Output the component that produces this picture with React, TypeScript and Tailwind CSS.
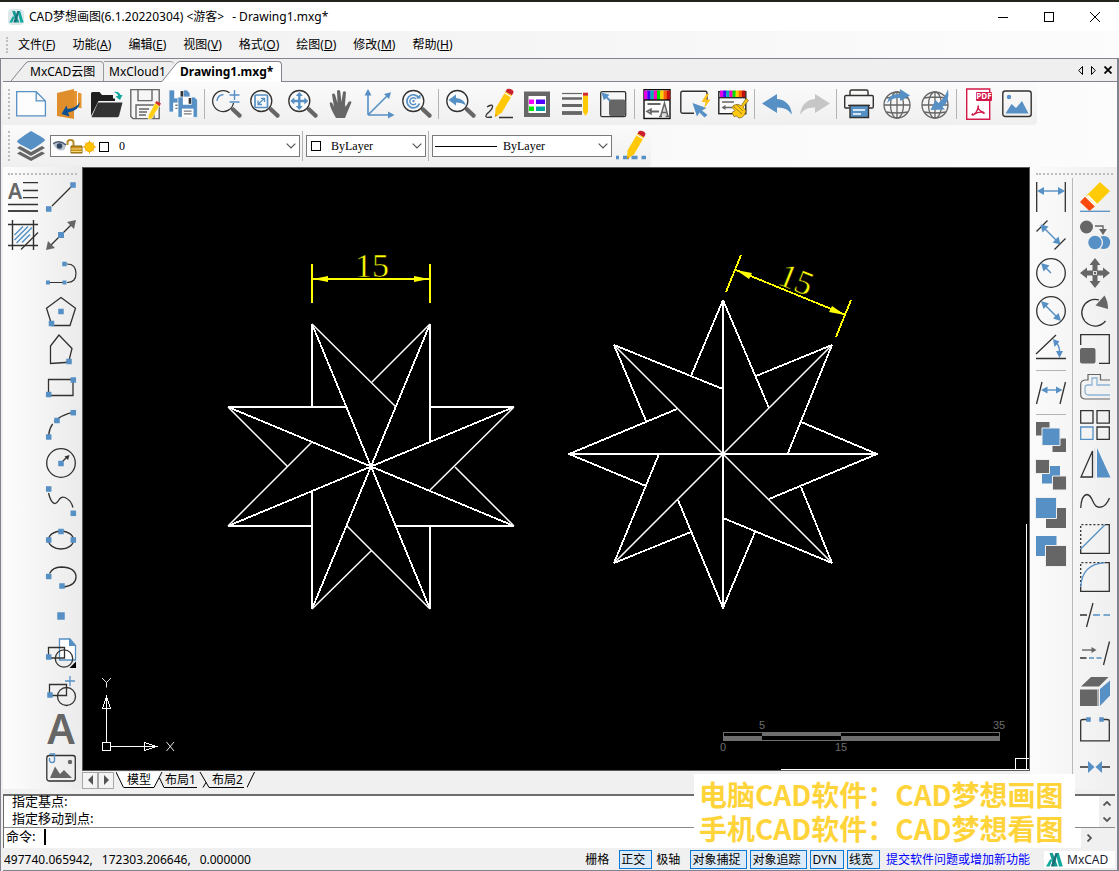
import React from "react";

const B = "#5690c4";
const D = "#33312f";
const G = "#666666";

type IconProps = { children: React.ReactNode };

function Ic({ children }: IconProps) {
  return (
    <svg viewBox="0 0 30 30" className="h-[30px] w-[30px] overflow-visible" fill="none" aria-hidden="true">
      {children}
    </svg>
  );
}

function Tool({ label, children }: { label: string; children: React.ReactNode }) {
  return (
    <button type="button" aria-label={label} title={label} className="flex h-[38px] w-[38px] shrink-0 items-center justify-center">
      <Ic>{children}</Ic>
    </button>
  );
}

function Sep() {
  return <span className="mx-0.5 h-[30px] w-0.5 shrink-0 border-l border-[#b4b4b4]" />;
}

function HSep() {
  return <span className="my-0.5 ml-1 h-0.5 w-[30px] shrink-0 border-t border-[#b4b4b4]" />;
}

function Sq({ x, y, s = 5.5 }: { x: number; y: number; s?: number }) {
  return <rect x={x - s / 2} y={y - s / 2} width={s} height={s} fill={B} />;
}

function Pencil() {
  return (
    <>
      <path d="M11 28l0.5-8.5L21.5 2.500l6.500 3.800L18 23.500z" fill="#ffc90a" />
      <path d="M21.500 2.500l1.500-2.500q2.800-.8 5 .8t1.300 3l-1.300 2.500z" fill="#c9202b" />
      <path d="M20.600 4l6.600 3.800" stroke="#fff" strokeWidth="1.200" />
      <path d="M11 28l.2-3 2.600 1.500z" fill="#e59a00" />
    </>
  );
}

function Lens({ children }: IconProps) {
  return (
    <>
      <path d="M19 19.500l2.500-1.500 8 7.500q.8 3-2.500 3.500l-8-7.500z" fill={G} />
      <circle cx="11.300" cy="12" r="10.500" stroke={D} strokeWidth="1.300" fill="#fafafa" />
      {children}
    </>
  );
}

function Globe() {
  return (
    <g stroke={G} strokeWidth="1.300">
      <circle cx="15" cy="16" r="13" />
      <ellipse cx="15" cy="16" rx="6.500" ry="13" />
      <path d="M15 3v26M2 16h26M4 9q11-2 22 0M4 23q11 2 22 0" />
    </g>
  );
}

function Floppy({ x, y, s }: { x: number; y: number; s: number }) {
  return (
    <g transform={`translate(${x} ${y}) scale(${s})`}>
      <path d="M0 0h17l3 3v18H0z" fill={B} stroke="#eef3f8" strokeWidth=".8" />
      <path d="M5 0h9v8H5z" fill="#fff" />
      <path d="M11 1h2.500v6H11z" fill="#333" />
      <path d="M4 12h12v9H4z" fill="#fff" />
      <path d="M6 14.500h8M6 17.500h8" stroke="#777" strokeWidth="1.300" />
    </g>
  );
}

function Spectrum({ h, w }: { h: number; w: number }) {
  const colors = ["#e000e0", "#4400ff", "#00b0b0", "#ff00c0", "#00e000", "#ffd000", "#ff6000", "#c01010"];
  return (
    <>
      {colors.map((c, i) => (
        <rect key={c} x={2 + (i * w) / 8} y="1.500" width={w / 8 + 0.2} height={h} fill={c} />
      ))}
    </>
  );
}

function Picture({ tone }: { tone: string }) {
  return (
    <>
      <rect x=".8" y="2" width="28.400" height="25.500" rx="2.500" stroke={D} strokeWidth="1.400" />
      <path d="M3.500 24.500l6-9.500 4.500 4 6-7 6.500 12.500z" fill={tone} />
    </>
  );
}

const topTools: (React.ReactNode | null)[] = [
  <Tool label="新建">
    <path d="M.7 2.700h19.500l9.200 9.200v15H.7zM20.200 2.700v9.200h9.200" fill="#fdfdfd" stroke={B} strokeWidth="1.300" />
  </Tool>,
  <Tool label="导入">
    <path d="M20 2h3v18h-3zM24 3.500l3.500 1v15l-3.500-1z" fill="#e59632" />
    <path d="M3 4l17-4v30L3 27z" fill="#e08e2c" />
    <path d="M26 13q-1 9-12 10.500l1.500 4L7.500 25l5-8.500 1 3.500q9-1 12.500-7z" fill="#0d4f93" />
  </Tool>,
  <Tool label="打开">
    <path d="M-1 27V4.500q0-1.500 1.500-1.500h7l2.500 3H21v3.500h2V12H6.500z" fill="#1f1f1f" />
    <path d="M6 13.500h24.500L27 27q-.5 1.200-2 1.200H-.5z" fill="#333" />
    <path d="M21 3q6-1.500 7.500 3h2l-2.500 5-4.500-3.500 2.500-.8Q25.500 4 21 3z" fill="#16a79c" />
  </Tool>,
  <Tool label="保存">
    <path d="M.8.600h28.400v29H3l-2.200-2.200z" stroke={G} strokeWidth="1.400" fill="#f6f6f6" />
    <path d="M8 .6v11h14V.6M6 29.500V16h18v13.500" stroke={G} strokeWidth="1.400" />
    <path d="M9 20h10M9 23h8M9 26h7" stroke={G} strokeWidth="1.500" />
    <path d="M25 14l4.500 3L22 29.500l-4 1 .5-4.500z" fill="#ffcf10" stroke="#fff" strokeWidth=".5" />
    <path d="M25 14l1.500-2 4.500 2.500-1.500 2.500z" fill="#d32a2a" />
  </Tool>,
  <Tool label="全部保存">
    <Floppy x={1} y={1} s={1.050} />
    <Floppy x={10} y={8} s={0.970} />
  </Tool>,
  null,
  <Tool label="实时缩放">
    <path d="M19 19.500l2.500-1.500 8 7.500q.8 3-2.500 3.500l-8-7.500z" fill={G} />
    <path d="M17.500 3.700A10.500 10.500 0 1 0 21.500 14" stroke={D} strokeWidth="1.300" />
    <path d="M5 12q.5-6 6.500-6.500M22.500 1v10M17.500 6h10M17.500 13h10" stroke={B} strokeWidth="1.400" />
  </Tool>,
  <Tool label="窗口缩放">
    <Lens>
      <rect x="5" y="6" width="12.500" height="12.500" rx="1" stroke={B} strokeWidth="1.700" />
      <path d="M8.500 15l5.500-5.500M14.500 13V9.300h-3.700M8 11.500v4h4" stroke={B} strokeWidth="1.300" />
    </Lens>
  </Tool>,
  <Tool label="范围缩放">
    <Lens>
      <path d="M11.300 3l3.500 4h-2.300v3.800h3.800V8.500l4 3.500-4 3.500v-2.300h-3.800V17h2.300l-3.500 4-3.500-4h2.300v-3.800H6.300v2.300l-4-3.500 4-3.500v2.300h3.800V7H7.800z" fill={B} />
    </Lens>
  </Tool>,
  <Tool label="平移">
    <path d="M10 29Q4 19 3.700 14q1.300-1.500 2.800.5l1.500 3.500L6 5.500Q7.500 3.500 9 5.500L11.500 14 11 2q1.500-2 3.200 0L15.500 13 17 3q1.700-1.700 3 .3L19 15l.5 3 3-5q2-1.500 3 .2L21 24l-2 5z" fill={G} />
  </Tool>,
  <Tool label="坐标系">
    <path d="M4 26V4M4 26h22M4 26L23 7" stroke={B} strokeWidth="1.600" />
    <path d="M4 0l3.500 6.500H.5zM30.500 26L24 29.500v-7zM27 3.200L25 10l-5-5z" fill={B} />
  </Tool>,
  <Tool label="重生成">
    <Lens>
      <path d="M17 9A6.500 6.500 0 1 0 17.500 14.500" stroke={B} strokeWidth="1.700" />
      <path d="M14 9.500h4.500V5z" fill={B} />
      <path d="M14 10A3.500 3.500 0 1 0 14 14.500" stroke={B} strokeWidth="1.400" />
      <circle cx="11.500" cy="12" r="1.200" fill={B} />
    </Lens>
  </Tool>,
  null,
  <Tool label="上一视图">
    <Lens>
      <path d="M2.500 11L10 5.500V9q8 .5 10 7.500-4-3-10-3v3z" fill={B} />
    </Lens>
  </Tool>,
  <Tool label="编辑">
    <path d="M3 18q5-3 5.500-1T5 23q-3.500 3-3 4.500t6 .5M15 28.500h14" stroke={D} strokeWidth="1.300" />
    <Pencil />
  </Tool>,
  <Tool label="特性">
    <rect x="2" y="2.500" width="26" height="25.500" fill={G} />
    <rect x="6.500" y="7" width="17.500" height="17" fill="#fff" />
    <rect x="7" y="10.500" width="5" height="4.500" fill="#ff00ff" />
    <rect x="14" y="10.500" width="9" height="4.500" fill="#5000ff" />
    <rect x="7" y="17.500" width="5" height="4.500" fill="#00f000" />
    <rect x="14" y="17.500" width="9" height="4.500" fill="#00a8a0" />
  </Tool>,
  <Tool label="线宽">
    <path d="M2 4.500h20" stroke={G} strokeWidth="1.200" />
    <path d="M2 9.500h20" stroke={G} strokeWidth="2.500" />
    <path d="M2 16.500h20" stroke={G} strokeWidth="3" />
    <path d="M2 24h20" stroke={G} strokeWidth="3.800" />
    <path d="M23 6.500h5V23l-2.500 4L23 23z" fill="#ffc90a" />
    <path d="M23 3.700h5v3h-5z" fill="#d32a2a" />
  </Tool>,
  <Tool label="缩放图形">
    <rect x="2.700" y="2.700" width="25" height="25" rx="1.500" stroke={D} strokeWidth="1.300" />
    <rect x="11" y="10.500" width="16.500" height="16.500" rx="2" fill={G} />
    <path d="M3.500 3.500l8 2.300-2 2 3 3-1.400 1.400-3-3-2.300 2z" fill={B} />
  </Tool>,
  null,
  <Tool label="文字样式">
    <rect x="2" y=".7" width="26" height="28.800" fill="#fbfbfb" stroke="#111" strokeWidth="1.400" />
    <Spectrum h={9.500} w={26} />
    <path d="M2 11h26" stroke="#111" strokeWidth="1.400" />
    <path d="M5.500 15h13M8 22.500h9" stroke={G} strokeWidth="1.800" />
    <path d="M5 22.500l4-2.500v5zM17 27.500h3M23.500 27.500H28M18.500 27.500l4-13.500 3.500 13.500M19.700 23.500h5" stroke={G} strokeWidth="1.500" fill={G} fillOpacity="0.200" />
  </Tool>,
  <Tool label="快速选择">
    <path d="M27 14V4q0-1.700-1.700-1.700H2.500Q.8 2.300.8 4v18.500q0 1.700 1.700 1.700H14" stroke={D} strokeWidth="1.400" />
    <path d="M12.500 14l14 5-4.500 2.500 5.500 4.500-3 2.500-5-5-2.500 4z" fill={B} />
    <path d="M26.500 5l-5 8h4l-1.500 6.500 6.500-9h-4.500L29 5z" fill="#ffc21a" />
  </Tool>,
  <Tool label="特性匹配">
    <rect x=".8" y="2.700" width="27" height="22" fill="#fafafa" stroke="#222" strokeWidth="1.400" />
    <Spectrum h={6.500} w={25} />
    <path d="M1 8.700h27" stroke="#222" strokeWidth="1.300" />
    <path d="M4 13h12M6 18.500h9" stroke={G} strokeWidth="1.700" />
    <path d="M3.500 18.500l4-2.500v5z" fill={G} />
    <path d="M28 9.500l2.500 2L25 18l3 4q-2 7-7 7-2-3-5-1.500l-2-4 3-2-3-3 2-2.500 5-.5 2 1.500z" fill="#ffc914" stroke="#8a6d1a" strokeWidth=".8" />
    <path d="M15 17l9 8M18 15l7 7" stroke="#8a6d1a" strokeWidth=".8" />
  </Tool>,
  null,
  <Tool label="撤销">
    <path d="M0 14.500L15 5v5q13 1 15 15.500Q25 18 15 18.500V24z" fill={B} />
  </Tool>,
  <Tool label="重做">
    <path d="M30 14.500L15 5v5Q2 11 0 25.500 5 18 15 18.500V24z" fill="#c6c6c6" />
  </Tool>,
  null,
  <Tool label="打印">
    <path d="M6 6V2.500q0-1.500 1.500-1.500h15Q24 1 24 2.500V6M5.500 19H2q-1.300 0-1.300-1.300V8Q.7 6.500 2 6.500h26q1.300 0 1.300 1.500v9.700Q29.300 19 28 19h-3.500" stroke={D} strokeWidth="1.400" />
    <path d="M4 16.500h22" stroke={D} strokeWidth="1.400" />
    <path d="M6 16.500h18.500v12H6z" fill={B} stroke={D} strokeWidth="1.400" />
    <path d="M9 21h12M9 25h8" stroke="#fff" strokeWidth="1.300" />
  </Tool>,
  <Tool label="网页发布">
    <Globe />
    <path d="M5 14Q7 4 18 5V0l10 6.500L18 12V9Q10 8.500 5 14z" fill={B} />
  </Tool>,
  <Tool label="网页下载">
    <Globe />
    <path d="M28 0Q30 13 22.500 18l2.500 2.500-14.500.5 5-10 3 3Q25 9 28 0z" fill={B} />
  </Tool>,
  null,
  <Tool label="导出PDF">
    <path d="M2.700 0h23v30.300h-23z" fill="#fff" stroke="#d4184a" strokeWidth="1.400" />
    <rect x="12" y="3" width="16" height="9" rx="1" fill="#d4184a" />
    <text x="20" y="10.300" textAnchor="middle" fontSize="8" fontFamily="Open Sans" fontWeight="700" fill="#fff">PDF</text>
    <path d="M9 26q5-3 5.300-9.500-1 5 5.500 7Q14 22 9 26q-2 0 0-1.500M19.800 23.500q1 1.300-1 .6" stroke="#d4184a" strokeWidth="1.400" />
  </Tool>,
  <Tool label="导出图片">
    <Picture tone={B} />
    <circle cx="7" cy="8" r="2.200" fill={B} />
  </Tool>,
];

const leftA: React.ReactNode[] = [
  <Tool label="多行文字">
    <path d="M15 .7h15M15 8.500h15M15 15.700h15M0 22.500h30" stroke={D} strokeWidth="1.300" />
    <path d="M0 29h30" stroke={D} strokeWidth="1.800" />
    <text x="0" y="16.500" fontSize="21" fontFamily="Noto Sans" fontWeight="600" fill={G}>A</text>
  </Tool>,
  <Tool label="填充">
    <path d="M0 4.500h30M0 25.500h30M4.500 0v30M25.500 0v30" stroke={D} strokeWidth="1.400" />
    <path d="M13 29.500L30 12.500" stroke={D} strokeWidth="1.300" />
    <path d="M6.500 15L15 6.500M6.500 20L20 6.500M8.500 23L24 7.500M14 22.500l8-8" stroke={B} strokeWidth="1.500" />
  </Tool>,
];

const leftB: React.ReactNode[] = [
  <Tool label="直线">
    <path d="M6 24L25 5" stroke={D} strokeWidth="1.200" />
    <Sq x={27} y={3} />
    <Sq x={2.700} y={27} />
  </Tool>,
  <Tool label="构造线">
    <path d="M4 26L26 4" stroke={D} strokeWidth="1.200" />
    <path d="M30 0l-2 9-7-7zM0 30l2-9 7 7z" fill={G} />
    <Sq x={15} y={15} s={6} />
  </Tool>,
  <Tool label="多段线">
    <path d="M2 24.500h16M21 6q9 0 9 9.300t-9 9.200" stroke={D} strokeWidth="1.200" />
    <Sq x={18.500} y={6} s={4.500} />
    <Sq x={2} y={24.500} s={4} />
    <Sq x={18.500} y={24.500} s={4} />
  </Tool>,
  <Tool label="正多边形">
    <path d="M15 1.500l14.500 10.700L24 29.500H6L.5 12.200z" stroke={D} strokeWidth="1.300" />
    <Sq x={15} y={15.500} />
    <Sq x={5.500} y={27.500} />
  </Tool>,
  <Tool label="多边形">
    <path d="M13 1L4.500 12v17.500l15-1 3.500-2 3-12z" stroke={D} strokeWidth="1.300" />
    <Sq x={23} y={27.500} />
  </Tool>,
  <Tool label="矩形">
    <path d="M2.500 7.500h24.500v16H2.500z" stroke={D} strokeWidth="1.300" />
    <Sq x={27.300} y={8} />
    <Sq x={2.700} y={22.500} />
  </Tool>,
  <Tool label="圆弧">
    <path d="M2.700 25Q4 8 26 2.700" stroke={D} strokeWidth="1.300" strokeDasharray="12 2.500 3 2.500 20" />
    <Sq x={27.300} y={2.700} />
    <Sq x={11} y={10.500} />
    <Sq x={2.700} y={27} />
  </Tool>,
  <Tool label="圆">
    <circle cx="15" cy="15" r="14.300" stroke={D} strokeWidth="1.300" />
    <path d="M15 15l6-6" stroke={D} strokeWidth="1.200" />
    <path d="M23.500 7l-1.500 5-3.500-3.500z" fill={D} />
    <Sq x={15} y={15.500} />
  </Tool>,
  <Tool label="样条曲线">
    <path d="M2.500 7q2.500 10 6 10.500 2.500 0 5-4.500 2-2.500 5.500-1.500 6 2.500 8 10" stroke={D} strokeWidth="1.300" />
    <Sq x={2.700} y={3} />
    <Sq x={27.300} y={27.300} />
  </Tool>,
  <Tool label="椭圆">
    <ellipse cx="15" cy="16" rx="12.500" ry="9" stroke={D} strokeWidth="1.300" />
    <Sq x={15} y={7.500} />
    <Sq x={2.700} y={16} />
    <Sq x={27.300} y={16} />
  </Tool>,
  <Tool label="椭圆弧">
    <path d="M3.500 11.500Q7 5 15 5q15 .5 15 10 0 8-12 10" stroke={D} strokeWidth="1.300" />
    <Sq x={2.700} y={14.500} />
    <Sq x={16} y={24} />
  </Tool>,
  <Tool label="点">
    <Sq x={15} y={16} s={7.500} />
  </Tool>,
  <Tool label="插入块">
    <path d="M13.500 1H24l5.500 6.500V22h-16z" fill="#fff" stroke={B} strokeWidth="1.300" />
    <path d="M23 0l7 8h-7z" fill={B} />
    <path d="M2.500 9.500h16v10.500h-16z" stroke={D} strokeWidth="1.300" />
    <circle cx="18" cy="20.500" r="8.700" stroke={D} strokeWidth="1.300" />
    <Sq x={2.700} y={19} />
    <path d="M30 23.500V30h-6.500z" fill="#000" />
  </Tool>,
  <Tool label="创建块">
    <path d="M3.500 8.500h17v11h-17z" stroke={D} strokeWidth="1.300" />
    <circle cx="20.500" cy="20.500" r="9" stroke={D} strokeWidth="1.300" />
    <path d="M24 0v10M19 5h10" stroke={B} strokeWidth="1.300" />
    <Sq x={4} y={19} />
  </Tool>,
  <Tool label="单行文字">
    <text x="15" y="30" textAnchor="middle" fontSize="41" fontFamily="Noto Sans" fontWeight="600" fill={G}>A</text>
  </Tool>,
  <Tool label="插入图片">
    <rect x=".8" y="3.500" width="28.500" height="25.500" rx="2.500" stroke={D} strokeWidth="1.300" />
    <path d="M4 26L9 14.500l5 7.500 4-4 8 8z" fill={G} />
    <circle cx="24" cy="10" r="2.200" fill={G} />
    <path d="M3.500 2h5v6.500q0 2-2.200 2T3.500 8.500V6" stroke={B} strokeWidth="1.400" />
  </Tool>,
];

function Stack({ order }: { order: number }) {
  const shapes = [
    <><path d="M0 0h13.500v13.500H0zM16.500 16.500h13.500V30H16.500z" fill={G} /><path d="M6 6h18v17.500H6z" fill={B} stroke="#eee" /></>,
    <><path d="M6 6h18v17.500H6z" fill={B} /><path d="M-.5-.5h14V13.500h-14zM16.500 16h14v14h-14z" fill={G} stroke="#eee" /></>,
    <><path d="M10 10h20v20H10z" fill={G} /><path d="M-.5-.5h21v21h-21z" fill={B} stroke="#eee" /></>,
    <><path d="M0 0h20.500v20H0z" fill={B} /><path d="M9.500 9.500h21v21h-21z" fill={G} stroke="#eee" /></>,
  ];
  return shapes[order];
}

const rightA: (React.ReactNode | null)[] = [
  <Tool label="线性标注">
    <path d="M.7 0v30M29.300 0v30" stroke={D} strokeWidth="1.300" />
    <path d="M5 9h20" stroke={B} strokeWidth="1.400" />
    <path d="M1 9l7-4v8zM29 9l-7-4v8z" fill={B} />
  </Tool>,
  <Tool label="对齐标注">
    <path d="M.5 11.500L11.500.5M18.500 29.500l11-11" stroke={D} strokeWidth="1.300" />
    <path d="M7 7l15 15" stroke={B} strokeWidth="1.400" />
    <path d="M4.500 4.500l8 2-6 6zM24.500 24.500l-8-2 6-6z" fill={B} />
  </Tool>,
  <Tool label="半径标注">
    <circle cx="15" cy="15" r="14.300" stroke={D} strokeWidth="1.300" />
    <path d="M8 8l7 7" stroke={B} strokeWidth="1.500" />
    <path d="M5 5l8.500 2.500-6 6z" fill={B} />
  </Tool>,
  <Tool label="直径标注">
    <circle cx="15" cy="15" r="14.300" stroke={D} strokeWidth="1.300" />
    <path d="M8 8l14 14" stroke={B} strokeWidth="1.500" />
    <path d="M5 5l8 2.500L7.500 13zM25 25l-8-2.500 5.500-5.500z" fill={B} />
  </Tool>,
  <Tool label="角度标注">
    <path d="M0 20L20 1M0 24.500h30" stroke={D} strokeWidth="1.300" />
    <path d="M20 8q4 5 3.500 11" stroke={B} strokeWidth="1.400" />
    <path d="M17 5l6.500 2.500-5 5.500zM20 17h7l-3.500 7z" fill={B} />
  </Tool>,
  null,
  <Tool label="编辑标注">
    <path d="M.5 26L6 4M24 26l5.500-22" stroke={D} strokeWidth="1.300" />
    <path d="M8 12h15" stroke={B} strokeWidth="1.400" />
    <path d="M5 12l6.500-3.500v7zM26.500 12L20 8.500v7z" fill={B} />
  </Tool>,
  null,
  <Tool label="置于对象之上"><Stack order={0} /></Tool>,
  <Tool label="置于对象之下"><Stack order={1} /></Tool>,
  <Tool label="前置"><Stack order={2} /></Tool>,
  <Tool label="后置"><Stack order={3} /></Tool>,
];

const rightB: React.ReactNode[] = [
  <Tool label="删除">
    <path d="M20 0l10 9-14.500 14.500L6 14z" fill="#ffcb05" />
    <path d="M6 14l9.500 9.500-1.500 1.500L4.500 15.500z" fill="#fff" />
    <path d="M5 14.800L14.800 24.500 9.500 29 0 20z" fill="#fb4b0c" />
    <path d="M7.500 13.500l9 9" stroke="#fff" strokeWidth="2" />
    <path d="M0 29.300h30" stroke={B} strokeWidth="1.300" />
  </Tool>,
  <Tool label="复制">
    <circle cx="6.500" cy="7" r="6.500" fill={G} />
    <path d="M15 6h8v5" stroke={G} strokeWidth="1.400" />
    <path d="M19 9h8l-4 6z" fill={G} />
    <circle cx="15" cy="22.500" r="6.700" fill={B} />
    <path d="M20.500 16.500q9-2 9.700 6-.7 8-9.700 6 5-6 0-12z" fill={B} />
  </Tool>,
  <Tool label="移动">
    <path d="M15 0l5.500 7h-3v5.500H23v-3l7 5.500-7 5.500v-3h-5.500V23h3L15 30l-5.500-7h3v-5.500H7v3L0 15l7-5.500v3h5.500V7h-3z" fill={G} />
    <rect x="13.500" y="13.500" width="3" height="3" stroke="#ddd" />
  </Tool>,
  <Tool label="旋转">
    <path d="M19 4A13.300 13.300 0 1 0 25.500 25" stroke={D} strokeWidth="1.300" />
    <path d="M24.500 -.5Q28 5 28 13L15.500 9.500z" fill={G} />
  </Tool>,
  <Tool label="缩放">
    <path d="M.7 11V.7h28.600v28.600H19" stroke={D} strokeWidth="1.300" />
    <rect x="0" y="14" width="15.500" height="15.500" rx="2" fill={G} />
  </Tool>,
  <Tool label="偏移">
    <path d="M30 8h-9.500V2.500H8V8H5Q.7 8.500.7 12.500v10q0 4 4 4.500H30" stroke={G} strokeWidth="1.200" />
    <path d="M30 13H17V6h-5v7H8q-3 0-3 3v3q0 4 3.500 4H30" stroke="#8fb4d6" strokeWidth="1.300" />
  </Tool>,
  <Tool label="阵列">
    <path d="M.7.700H13v12.500H.7zM17 .7h12.300v12.500H17zM17 17h12.300v12.300H17z" stroke={D} strokeWidth="1.300" />
    <path d="M.7 17H13v12.300H.7z" stroke={B} strokeWidth="1.300" />
  </Tool>,
  <Tool label="镜像">
    <path d="M12.500 3v26H1z" stroke={D} strokeWidth="1.300" />
    <path d="M17 0l13.500 29.500H17z" fill={B} />
    <path d="M14.800 0v30" stroke="#ddd" />
  </Tool>,
  <Tool label="编辑曲线">
    <path d="M.7 22Q1.500 9 7 8.500q3 0 6 7t8 5.500q5-.5 8.500-9" stroke={D} strokeWidth="1.300" />
  </Tool>,
  <Tool label="倒角">
    <path d="M.7 25v4.300h28.600V.7H25" stroke={D} strokeWidth="1.300" />
    <path d="M.7 24V.7H25" stroke={D} strokeWidth="1.300" strokeDasharray="2 2" />
    <path d="M.7 25L25 .7" stroke={B} strokeWidth="1.300" />
  </Tool>,
  <Tool label="圆角">
    <path d="M.7 25v4.300h28.600V.7H25" stroke={D} strokeWidth="1.300" />
    <path d="M.7 24V.7H25" stroke={D} strokeWidth="1.300" strokeDasharray="2 2" />
    <path d="M.7 25Q2 2 25 .7" stroke={B} strokeWidth="1.300" />
  </Tool>,
  <Tool label="修剪">
    <path d="M0 15h7M6.500 27L13 3" stroke={D} strokeWidth="1.300" />
    <path d="M13 15h7M23.500 15H30" stroke={B} strokeWidth="1.300" />
  </Tool>,
  <Tool label="延伸">
    <path d="M0 20h6.500M23.500 27L29.500 3.500" stroke={D} strokeWidth="1.300" />
    <path d="M9 20h5M16.500 20h5" stroke={B} strokeWidth="1.300" />
    <path d="M2 12h11" stroke={G} strokeWidth="1.400" />
    <path d="M11.500 9l5 3-5 3z" fill={G} />
  </Tool>,
  <Tool label="立方体">
    <path d="M0 13.500h17.500V30H0zM11 1h17.500l-9.500 9.500H1z" fill={G} />
    <path d="M20 13l10-8.500v15L20 30z" fill={B} />
    <path d="M18.500 13v17" stroke="#999" strokeWidth=".8" />
  </Tool>,
  <Tool label="打断">
    <path d="M7 5.500H3Q.7 5.500.7 7v19.800h28.600V7Q29.300 5.500 27 5.500h-4" stroke={D} strokeWidth="1.300" />
    <Sq x={8.500} y={5.500} s={4.500} />
    <Sq x={21.500} y={5.500} s={4.500} />
  </Tool>,
  <Tool label="合并">
    <path d="M0 15h9M21 15h9" stroke={D} strokeWidth="1.400" />
    <path d="M8 9l6.500 6L8 21zM22 9l-6.500 6 6.500 6z" fill={B} />
  </Tool>,
];

function withKeys(items: (React.ReactNode | null)[], sep: React.ReactNode) {
  return items.map((t, i) => <React.Fragment key={i}>{t ?? sep}</React.Fragment>);
}

function Chevron() {
  return (
    <svg viewBox="0 0 10 6" className="mr-[3px] h-[6px] w-[10px] shrink-0" fill="none" aria-hidden="true">
      <path d="M.7.700L5 5 9.300.700" stroke="#555" strokeWidth="1.200" />
    </svg>
  );
}

const selectClass = "h-full min-w-0 flex-1 appearance-none bg-transparent font-['Liberation_Serif','Noto_Sans_CJK_SC',serif] text-[12px] text-black outline-none";
const comboClass = "flex h-[22px] items-center border border-[#7a7a7a] bg-white";

const thick: number[][] = [
  [312, 324, 430, 609], [430, 324, 312, 609], [228, 407, 514, 526], [228, 526, 514, 407],
  [312, 324, 312, 407], [430, 324, 430, 442], [430, 407, 514, 407], [514, 526, 396, 526],
  [430, 526, 430, 609], [312, 609, 312, 491], [312, 526, 228, 526], [228, 407, 347, 407],
  [723, 300, 723, 609], [568, 454, 878, 454], [723, 300, 691, 376], [614, 345, 723, 389],
  [723, 300, 769, 408], [832, 345, 756, 376], [832, 345, 788, 453], [877, 454, 801, 422],
  [877, 454, 769, 499], [832, 563, 801, 487], [832, 563, 723, 518], [723, 608, 755, 532],
  [723, 608, 678, 500], [614, 563, 691, 532], [614, 563, 659, 454], [569, 454, 646, 486],
  [569, 454, 677, 409], [614, 345, 646, 421],
];
const thin: number[][] = [
  [312, 324, 396, 407], [430, 324, 372, 382], [514, 407, 430, 490], [514, 526, 455, 467],
  [430, 609, 347, 526], [312, 609, 371, 551], [228, 526, 312, 442], [228, 407, 287, 466],
  [614, 345, 832, 563], [832, 345, 614, 563],
];

function Lines({ data }: { data: number[][] }) {
  return (
    <path d={data.map(([a, b, c, d]) => `M${a} ${b}L${c} ${d}`).join("")} />
  );
}

function Drawing() {
  return (
    <svg viewBox="83 168 946 602" preserveAspectRatio="xMinYMin meet" className="block min-h-0 w-full flex-1" fill="none" role="img" aria-label="Drawing1">
      <g stroke="#fff">
        <g strokeWidth="1.800" shapeRendering="crispEdges"><Lines data={thick} /></g>
        <g strokeWidth="1.500"><Lines data={thin} /></g>
        <path shapeRendering="crispEdges" d="M106.500 742V708M102.500 708.500h8l-4-12zM106.500 698v10M111 746.500h33M144.500 742.500v8l12-4zM145 746.500h11M102.500 742.500h8v8h-8z" />
        <path shapeRendering="crispEdges" d="M1026.500 524V770M781 769.500H1029M1015.500 769V758.500H1029" />
      </g>
      <path d="M102 678l4.500 4.500L111 678M106.500 682.500v5M166.500 742l7.500 9M174 742l-7.500 9" stroke="#fff" strokeWidth=".9" />
      <g stroke="#ff0" strokeWidth="1.800" shapeRendering="crispEdges">
        <path d="M312 264V303M430 264V303M312 279H430M741 255L726 292M851 300L836 337M736 270L846 315" />
      </g>
      <path d="M313 279l15-3v6zM429 279l-15-3v6zM736 270l16 3-3 6zM845 315l-13-9-3 6z" fill="#ff0" />
      <g fill="#ffff00" stroke="#000" strokeWidth=".5" fontFamily="Liberation Serif, serif" fontSize="34">
        <text x="372" y="277" textAnchor="middle">15</text>
        <text x="0" y="0" textAnchor="middle" transform="translate(792 290) rotate(22)">15</text>
      </g>
      <g shapeRendering="crispEdges">
        <path d="M723.500 732.500h276v8h-276z" stroke="#6e6e6e" />
        <path d="M723 736h39v5h-39zM762 732h79v4h-79zM841 736h159v5H841z" fill="#6e6e6e" />
      </g>
      <g fill="#6e6e6e" fontFamily="Liberation Sans, sans-serif" fontSize="11" textAnchor="middle">
        <text x="762" y="729">5</text>
        <text x="999" y="729">35</text>
        <text x="723" y="751">0</text>
        <text x="841" y="751">15</text>
      </g>
    </svg>
  );
}

function Logo({ className }: { className: string }) {
  return (
    <svg viewBox="0 0 17 14" className={className} fill="none" aria-hidden="true">
      <path d="M0 13.500L4 6.500h2.500L3.500 13.500zM9.500 0h3.300l4 13.500H13z" fill="#12a89d" />
      <path d="M3.500 0h3.300l5 13.500H8z" fill="#159a93" />
      <path d="M5.200 12L9.500 0h2.300L8 13.500H5z" fill="#1b6f77" />
    </svg>
  );
}

const menus: [string, string][] = [
  ["文件", "F"], ["功能", "A"], ["编辑", "E"], ["视图", "V"], ["格式", "O"], ["绘图", "D"], ["修改", "M"], ["帮助", "H"],
];

const modes: [string, boolean][] = [
  ["栅格", false], ["正交", true], ["极轴", false], ["对象捕捉", true], ["对象追踪", true], ["DYN", true], ["线宽", true],
];

export default function App() {
  return (
    <div className="relative flex min-h-screen w-full flex-col border-t-2 border-[#23241c] bg-[#f0f0f0] font-['Noto_Sans','Noto_Sans_CJK_SC',sans-serif] text-[12px] leading-4 text-black">
      <header className="flex h-[29px] items-center bg-white pr-px pl-2">
        <span className="flex h-4 w-4 items-center justify-center rounded-sm bg-[#dde8ea]">
          <Logo className="h-3 w-[15px]" />
        </span>
        <h1 className="ml-[5px] flex flex-1 gap-2 whitespace-nowrap">
          <span>{"CAD梦想画图(6.1.20220304) <游客>"}</span>
          <span>{"- Drawing1.mxg*"}</span>
        </h1>
        <button type="button" aria-label="最小化" className="flex h-full w-[46px] items-center justify-center">
          <svg viewBox="0 0 10 10" className="h-[10px] w-[10px]" shapeRendering="crispEdges"><path d="M0 5.500h10" stroke="#000" /></svg>
        </button>
        <button type="button" aria-label="最大化" className="flex h-full w-[46px] items-center justify-center">
          <svg viewBox="0 0 10 10" className="h-[10px] w-[10px]" fill="none" shapeRendering="crispEdges"><path d="M.5.500h9v9h-9z" stroke="#000" /></svg>
        </button>
        <button type="button" aria-label="关闭" className="flex h-full w-[46px] items-center justify-center">
          <svg viewBox="0 0 10 10" className="h-[10px] w-[10px]"><path d="M0 0l10 10M10 0L0 10" stroke="#000" /></svg>
        </button>
      </header>

      <nav className="flex h-[27px] items-center bg-linear-to-r from-[#f0f0f0] to-[#fcfcfc] pl-1.5">
        <span className="mr-2.5 h-4 border-l-2 border-dotted border-[#bdbdbd]" />
        {menus.map(([name, key]) => (
          <button key={name} type="button" className="mr-[17px] whitespace-nowrap">
            {name}(<u>{key}</u>)
          </button>
        ))}
      </nav>

      <div className="flex flex-1 flex-col border-t border-r-2 border-l border-[#83838f] pl-0.5">
        <div className="flex h-[23px] items-end border-b border-[#83838f] bg-[#efefef] pl-2">
          <svg viewBox="0 0 18 20" className="h-5 w-[18px] shrink-0" fill="none"><path d="M0 20L14 3Q16 .5 18 .5" stroke="#83838f" /></svg>
          <button type="button" className="h-5 w-[75px] rounded-tr border-t border-r border-[#9a9a9a] pl-px text-left">MxCAD云图</button>
          <button type="button" className="h-5 w-[70px] rounded-tr border-t border-[#9a9a9a] pl-[5px] text-left">MxCloud1</button>
          <svg viewBox="0 0 18 21" className="-mb-px -ml-3 h-[21px] w-[18px] shrink-0" fill="none"><path d="M0 20.500L14 3Q16 .5 18 .5V21H0z" fill="#fff" /><path d="M0 20.500L14 3Q16 .5 18 .5" stroke="#83838f" /></svg>
          <button type="button" className="-mb-px h-[21px] rounded-tr border-t border-r border-[#83838f] bg-white pr-2 font-bold">Drawing1.mxg*</button>
          <span className="ml-auto flex h-full items-center gap-2 pr-[5px]">
            <button type="button" aria-label="上一个"><svg viewBox="0 0 5 9" className="h-[9px] w-[5px]" fill="none"><path d="M4.500.500v8L.7 4.500z" stroke="#000" /></svg></button>
            <button type="button" aria-label="下一个"><svg viewBox="0 0 5 9" className="h-[9px] w-[5px]" fill="none"><path d="M.5.500v8l3.800-4z" stroke="#000" /></svg></button>
            <button type="button" aria-label="关闭图纸"><svg viewBox="0 0 8 8" className="h-2 w-2"><path d="M.5.500l7 7M7.500.500l-7 7" stroke="#000" strokeWidth="1.800" /></svg></button>
          </span>
        </div>

        <div className="flex flex-col bg-linear-to-r from-[#f5f5f5] to-[#fcfcfc]">
          <div className="flex h-[43px] w-fit items-center rounded-r bg-linear-to-b from-[#fbfbfb] to-[#efefef] pr-px pl-[5px]">
            <span className="mr-0.5 h-[30px] border-l-2 border-dotted border-[#bdbdbd]" />
            {withKeys(topTools, <Sep />)}
          </div>
          <div className="flex h-[42px] w-fit items-center rounded-r bg-linear-to-b from-[#fbfbfb] to-[#efefef] pr-px pl-[5px]">
            <span className="mr-0.5 h-[30px] border-l-2 border-dotted border-[#bdbdbd]" />
            <Tool label="图层管理">
              <path d="M1 22.500l3-2 11 6 11-6 3 2L15 30z" fill={G} />
              <path d="M1 17l3-2 11 6 11-6 3 2-14 8z" fill={G} />
              <path d="M15 0q14 7.500 14 9t-14 10Q1 12 1 10.500T15 0z" fill={B} />
            </Tool>
            <label className={`${comboClass} w-[250px] pl-0.5`}>
              <svg viewBox="0 0 58 17" className="h-[17px] w-[58px] shrink-0" fill="none" aria-hidden="true">
                <path d="M1 6q5-4 12 0l-1 5q-4 3-8 0L1 8z" fill="#b9c3d0" />
                <path d="M0 6q6-5 13 1" stroke="#4b5b72" strokeWidth="1.500" />
                <circle cx="6.500" cy="8" r="2.800" fill="#30455f" />
                <path d="M14.500 7V4.500Q14.500 2 17 2h1q2.500 0 2.500 2.500V10" stroke="#b98b2a" strokeWidth="2" />
                <path d="M18 8h11v7H18z" fill="#c9931c" stroke="#8a6410" />
                <path d="M18 11h11M18 13.500h11" stroke="#f5d67a" />
                <circle cx="36.500" cy="9" r="4.600" fill="#ffc400" stroke="#f5a800" />
                <path d="M36.500 2.500v2M36.500 13.500v2M30 9h2M41 9h2M32 4.500l1.400 1.400M41 4.500l-1.400 1.400M32 13.500l1.400-1.400M41 13.500l-1.400-1.400" stroke="#f5a800" />
                <path d="M46.500 4.500h9v9h-9z" stroke="#000" shapeRendering="crispEdges" />
              </svg>
              <select aria-label="图层" className={`${selectClass} pl-2`}><option>0</option></select>
              <Chevron />
            </label>
            <Sep />
            <label className={`${comboClass} w-[120px] pl-1`}>
              <span className="h-[10px] w-[10px] border border-black bg-white" />
              <select aria-label="颜色" className={`${selectClass} pl-2.5`}><option>ByLayer</option></select>
              <Chevron />
            </label>
            <Sep />
            <label className={`${comboClass} w-[180px] pl-0.5`}>
              <span className="w-[62px] border-t border-black" />
              <select aria-label="线型" className={`${selectClass} pl-1.5`}><option>ByLayer</option></select>
              <Chevron />
            </label>
            <Tool label="线型管理">
              <path d="M0 26.500h3M7 26.500h16M25.500 26.500H30" stroke={B} strokeWidth="3.500" strokeDasharray="6 2.500" />
              <Pencil />
            </Tool>
          </div>
        </div>

        <main className="flex flex-1">
          <aside className="flex w-[79px] shrink-0 flex-col bg-linear-to-r from-[#fdfdfd] to-[#ebebeb] px-px pt-1.5">
            <span className="mx-1 mb-[3px] border-t-2 border-dotted border-[#bdbdbd]" />
            <div className="flex">
              <div className="flex w-[38px] flex-col">{withKeys(leftA, null)}</div>
              <div className="flex w-[38px] flex-col">{withKeys(leftB, null)}</div>
            </div>
          </aside>

          <section className="flex min-w-0 flex-1 flex-col">
            <div className="flex min-h-0 flex-1 flex-col border border-[#5a5a5a] bg-black">
              <Drawing />
            </div>
            <div className="flex h-[18px] items-center">
              <button type="button" aria-label="向左滚动" className="flex h-[17px] w-4 items-center justify-center border border-[#a8a8a8] bg-[#f4f4f4]">
                <svg viewBox="0 0 5 10" className="h-[10px] w-[5px]"><path d="M5 0v10L0 5z" fill="#555" /></svg>
              </button>
              <button type="button" aria-label="向右滚动" className="flex h-[17px] w-4 items-center justify-center border border-[#a8a8a8] bg-[#f4f4f4]">
                <svg viewBox="0 0 5 10" className="h-[10px] w-[5px]"><path d="M0 0v10l5-5z" fill="#555" /></svg>
              </button>
              <svg viewBox="0 0 8 16" className="ml-0.5 h-4 w-2"><path d="M0 0h8v16z" fill="#fff" /><path d="M0 0l7.500 15.500" stroke="#000" /></svg>
              <button type="button" className="h-4 border-b border-black bg-white px-[3px] leading-4">模型</button>
              <svg viewBox="0 0 10 16" className="h-4 w-2.5"><path d="M0 0h8L0 16z" fill="#fff" /><path d="M0 15.500L8 0M5.500 6L10 15.500" stroke="#000" /></svg>
              <button type="button" className="h-4 border-b border-black px-px leading-4">布局1</button>
              <svg viewBox="0 0 12 16" className="h-4 w-3"><path d="M3 0l9 15.500M9 10.500L6 15.500" stroke="#000" /></svg>
              <button type="button" className="h-4 border-b border-black pr-px pl-[3px] leading-4">布局2</button>
              <svg viewBox="0 0 8 16" className="ml-[3px] h-4 w-2"><path d="M0 15.500L7.500 0" stroke="#000" /></svg>
            </div>
          </section>

          <aside className="flex w-[87px] shrink-0 flex-col bg-linear-to-r from-[#fbfbfb] to-[#efefef] pt-1.5">
            <span className="mr-1 mb-[3px] ml-1.5 border-t-2 border-dotted border-[#bdbdbd]" />
            <div className="flex flex-1">
              <div className="flex w-[43px] flex-col items-start border-r border-[#b8b8b8] pl-0.5">
                {withKeys(rightA, <HSep />)}
              </div>
              <div className="ml-[3px] flex w-[38px] flex-col">{withKeys(rightB, null)}</div>
            </div>
          </aside>
        </main>

        <div className="mt-[5px] mr-0.5 flex h-[54px] shrink-0 flex-col border-t-2 border-l border-[#6d6d6d] bg-white font-['Noto_Sans_CJK_SC',sans-serif] text-[13px]">
          <div className="flex h-8 border-b border-[#8a8a8a]">
            <div className="-mt-1 flex-1 pl-2 leading-[17px]">
              <p>指定基点:</p>
              <p>指定移动到点:</p>
            </div>
            <div className="flex w-4 flex-col items-center justify-around bg-[#f0f0f0]">
              <svg viewBox="0 0 8 5" className="h-[5px] w-2" fill="none"><path d="M.5 4.500L4 1l3.500 3.500" stroke="#555" strokeWidth="1.800" /></svg>
              <svg viewBox="0 0 8 5" className="h-[5px] w-2" fill="none"><path d="M.5.500L4 4 7.500.500" stroke="#555" strokeWidth="1.800" /></svg>
            </div>
          </div>
          <label className="flex h-5 items-start pl-0.5 leading-4">
            命令:
            <span className="mt-px ml-2 h-4 w-0.5 bg-black" />
            <input type="text" aria-label="命令" className="min-w-0 flex-1 bg-transparent outline-none" />
            <span className="flex h-full w-4 items-center justify-center bg-[#f0f0f0]">
              <svg viewBox="0 0 5 8" className="h-2 w-[5px]" fill="none"><path d="M.5.500L4 4 .5 7.500" stroke="#555" strokeWidth="1.800" /></svg>
            </span>
            <span className="h-full w-[18px] bg-[#f0f0f0]" />
          </label>
        </div>

        <footer className="flex h-[23px] shrink-0 items-center border-b border-[#83838f] pt-px pl-px">
          <span className="flex flex-1 gap-[9px] whitespace-nowrap">
            <span>497740.065942,</span>
            <span>172303.206646,</span>
            <span>0.000000</span>
          </span>
          {modes.map(([name, on]) => (
            <button
              key={name}
              type="button"
              aria-pressed={on}
              className={on
                ? "mr-[3px] h-[19px] border border-[#0a78d7] bg-[#dcebf7] pr-1.5 pl-px whitespace-nowrap"
                : "mr-[5px] h-[19px] border border-transparent pr-1 whitespace-nowrap"}
            >
              {name}
            </button>
          ))}
          <a href="#feedback" className="ml-[3px] whitespace-nowrap text-[#0000ff]">提交软件问题或增加新功能</a>
          <span className="mr-0.5 ml-3.5 flex h-[17px] w-[71px] items-center gap-1 bg-white pl-0.5">
            <Logo className="h-[14px] w-[17px]" />
            <span className="text-[#1c2430]">MxCAD</span>
          </span>
        </footer>
      </div>

      <div className="absolute right-[44px] bottom-[23px] flex h-[74px] w-[381px] flex-col justify-center bg-white pl-[5px] font-['Noto_Sans_CJK_SC',sans-serif] text-[28px] leading-[34px] font-bold whitespace-nowrap text-[#ffd43b]">
        <p>电脑CAD软件：CAD梦想画图</p>
        <p>手机CAD软件：CAD梦想看图</p>
      </div>
    </div>
  );
}
